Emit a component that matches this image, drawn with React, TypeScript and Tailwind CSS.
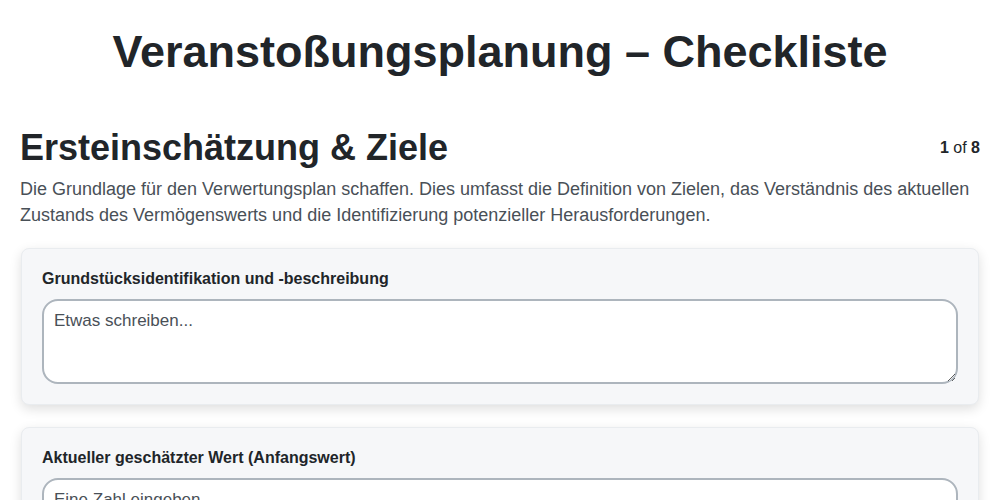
export default function App() {
    return (
        <div className="min-h-screen bg-white font-['Liberation_Sans',Arial,sans-serif] text-[#212529]">
            <div className="px-5 pb-10">
                <h1 className="pt-[23px] text-center text-[45px] font-bold leading-[58px]">
                    Veranstoßungsplanung – Checkliste
                </h1>

                <div className="mt-[45px] flex items-start justify-between">
                    <h2 className="text-[36px] font-bold leading-[44px]">Ersteinschätzung &amp; Ziele</h2>
                    <div className="mt-[10px] text-[16px]">
                        <span className="font-bold">1</span> of <span className="font-bold">8</span>
                    </div>
                </div>
                <p className="mt-[6px] text-[18px] leading-[26px] text-[#495057]">
                    Die Grundlage für den Verwertungsplan schaffen. Dies umfasst die Definition von Zielen, das Verständnis des aktuellen Zustands des Vermögenswerts und die Identifizierung potenzieller Herausforderungen.
                </p>

                <div className="mt-[20px] flex flex-col gap-[22px]">
                    <div className="mx-px rounded-lg border border-[#e9ecef] bg-[#f6f7f9] px-5 pb-5 pt-5 shadow-[0_4px_12px_rgba(0,0,0,0.13)]">
                        <label className="block text-[16px] font-bold leading-[20px]">
                            Grundstücksidentifikation und -beschreibung
                        </label>
                        <textarea
                            rows={3}
                            placeholder="Etwas schreiben..."
                            className="mt-[10px] block h-[85px] w-full rounded-2xl border-2 border-[#adb5bd] bg-white px-[10px] pb-[6px] pt-[9px] text-[17px] leading-[22px] outline-none placeholder:text-[#495057]"
                        />
                    </div>
                    <div className="mx-px rounded-lg border border-[#e9ecef] bg-[#f6f7f9] px-5 pb-5 pt-5 shadow-[0_4px_12px_rgba(0,0,0,0.13)]">
                        <label className="block text-[16px] font-bold leading-[20px]">
                            Aktueller geschätzter Wert (Anfangswert)
                        </label>
                        <input
                            type="text"
                            placeholder="Eine Zahl eingeben..."
                            className="mt-[10px] block h-[44px] w-full rounded-2xl border-2 border-[#adb5bd] bg-white px-[10px] py-[6px] text-[17px] outline-none placeholder:text-[#495057]"
                        />
                    </div>
                </div>
            </div>
        </div>
    );
}
